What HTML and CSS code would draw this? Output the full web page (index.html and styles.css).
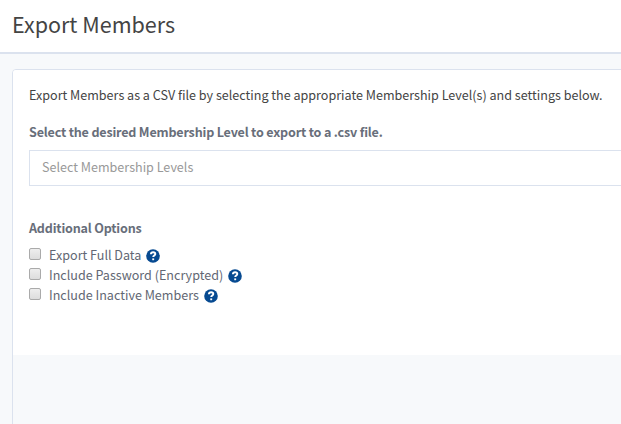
FILE: index.html
```html
<!DOCTYPE html>
<html lang="en">
<head>
<meta charset="utf-8">
<title>Export Members</title>
<link rel="stylesheet" href="styles.css">
</head>
<body>
<header class="page-header"><h1>Export Members</h1></header>
<main class="panel">
  <section class="panel-body">
    <p class="intro">Export Members as a CSV file by selecting the appropriate Membership Level(s) and settings below.</p>
    <h2 class="level-label">Select the desired Membership Level to export to a .csv file.</h2>
    <div class="select">Select Membership Levels</div>
    <h2 class="options-label">Additional Options</h2>
    <div class="options">
      <label class="option"><input type="checkbox"><span>Export Full Data</span><svg class="help" viewBox="0 0 14 14"><circle cx="7" cy="7" r="6.8"/><path d="M4.9 5.3C5 3.9 5.9 3.3 7.1 3.3c1.3 0 2.2.7 2.2 1.8 0 1.5-2.1 1.5-2.1 3"/><path d="M7.2 9.4v1.8"/></svg></label>
      <label class="option"><input type="checkbox"><span>Include Password (Encrypted)</span><svg class="help" viewBox="0 0 14 14"><circle cx="7" cy="7" r="6.8"/><path d="M4.9 5.3C5 3.9 5.9 3.3 7.1 3.3c1.3 0 2.2.7 2.2 1.8 0 1.5-2.1 1.5-2.1 3"/><path d="M7.2 9.4v1.8"/></svg></label>
      <label class="option"><input type="checkbox"><span>Include Inactive Members</span><svg class="help" viewBox="0 0 14 14"><circle cx="7" cy="7" r="6.8"/><path d="M4.9 5.3C5 3.9 5.9 3.3 7.1 3.3c1.3 0 2.2.7 2.2 1.8 0 1.5-2.1 1.5-2.1 3"/><path d="M7.2 9.4v1.8"/></svg></label>
    </div>
  </section>
</main>
</body>
</html>
```
FILE: styles.css
```css
* { box-sizing: border-box; }
body { margin: 0; height: 424px; overflow: hidden; background: #f7f9fb; font: 12.57px/20px "Noto Sans CJK SC", "Noto Sans", sans-serif; color: #444; }
h1, h2, p { margin: 0; white-space: nowrap; }
.page-header { height: 54px; padding: 8px 12px; background: #fff; border-bottom: 2px solid #dbe2ee; }
h1 { font-size: 21.5px; line-height: 32px; font-weight: 400; }
.panel { margin: 15px 0 0 12px; width: 640px; height: 370px; border: 1px solid #dbe2ee; border-radius: 4px 0 0; overflow: hidden; }
.panel-body { height: 285px; padding: 15px 16px; background: #fff; }
h2 { font-size: 12.57px; line-height: 20px; font-weight: 700; letter-spacing: -.19px; color: #686e7a; }
.level-label { margin-top: 17px; }
.select { height: 36px; margin-top: 8px; padding: 6px 12px; border: 1px solid #dbe2ee; color: #999; }
.options-label { margin-top: 32px; }
.options { margin-top: 7px; color: #626773; }
.option { display: flex; height: 20px; align-items: center; }
.option input { appearance: none; width: 12px; height: 12px; margin: 0 8px 3px 0; border: 1px solid #aaa; border-radius: 2px; background: linear-gradient(#eee, #ddd); }
.help { width: 14px; height: 14px; margin: 2px 0 0 5px; fill: #064a91; }
.help path { fill: none; stroke: #fff; stroke-width: 1.9; }
```
